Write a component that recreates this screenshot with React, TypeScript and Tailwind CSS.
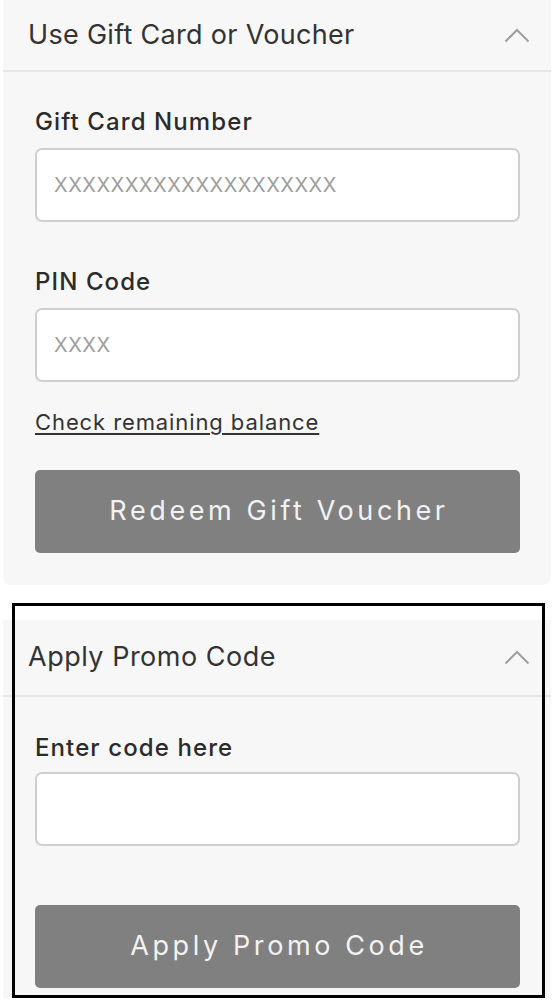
import { useState } from "react";

function Chevron() {
    return (
        <svg width="26" height="15" viewBox="0 0 26 15" fill="none">
            <polyline points="1.5,13.5 13,2 24.5,13.5" stroke="#9f9f9f" strokeWidth="2" />
        </svg>
    );
}

function Field({ label, placeholder, gap = "gap-[11px]" }: { label: string; placeholder?: string; gap?: string }) {
    const [value, setValue] = useState("");
    return (
        <div className={`flex flex-col ${gap}`}>
            <label className="text-[24px] leading-[30px] font-medium tracking-[1.1px] text-[#2b2b2b]">{label}</label>
            <input
                value={value}
                onChange={(e) => setValue(e.target.value)}
                placeholder={placeholder}
                className="h-[74px] w-full rounded-[7px] border-2 border-[#cfcfcf] bg-white px-[17px] text-[20px] tracking-[0.5px] text-[#333] outline-none placeholder:text-[#9d9d9d]"
            />
        </div>
    );
}

export default function App() {
    return (
        <div className="relative min-h-[1005px] bg-white font-['Inter',sans-serif]">
            {/* gift card panel */}
            <section className="ml-[3px] mr-[2px] rounded-b-[8px] bg-[#f7f7f7]">
                <header className="flex h-[70px] items-center justify-between pl-[25px] pr-[21px]">
                    <h2 className="text-[27px] tracking-[0.3px] text-[#333]">Use Gift Card or Voucher</h2>
                    <Chevron />
                </header>
                <div className="h-[2px] bg-[#e6e6e6]" />
                <div className="flex flex-col pl-[32px] pr-[31px] pt-[35px] pb-[32px]">
                    <Field label="Gift Card Number" placeholder="XXXXXXXXXXXXXXXXXXXX" />
                    <div className="mt-[45px]">
                        <Field label="PIN Code" placeholder="XXXX" />
                    </div>
                    <a href="#" className="mt-[26px] self-start text-[22px] leading-[28px] tracking-[0.9px] text-[#333] underline underline-offset-[3px]">
                        Check remaining balance
                    </a>
                    <button className="mt-[34px] h-[83px] w-full rounded-[5px] bg-[#808080] pl-[3px] text-[27px] tracking-[3.6px] text-[#f2f2f2]">
                        Redeem Gift Voucher
                    </button>
                </div>
            </section>

            {/* promo code panel */}
            <section className="ml-[3px] mr-[2px] mt-[35px] bg-[#f7f7f7]">
                <header className="flex h-[75px] items-center justify-between pl-[25px] pr-[21px]">
                    <h2 className="text-[27px] tracking-[0.5px] text-[#333]">Apply Promo Code</h2>
                    <Chevron />
                </header>
                <div className="h-[2px] bg-[#e6e6e6]" />
                <div className="flex flex-col pl-[32px] pr-[31px] pt-[36px] pb-[10px]">
                    <Field label="Enter code here" gap="gap-[9px]" />
                    <button className="mt-[59px] h-[83px] w-full rounded-[5px] bg-[#808080] pl-[3px] text-[27px] tracking-[3.6px] text-[#f2f2f2]">
                        Apply Promo Code
                    </button>
                </div>
            </section>

            {/* highlight frame */}
            <div className="pointer-events-none absolute left-[12px] top-[603px] h-[395px] w-[533px] border-[3px] border-black" />
        </div>
    );
}
